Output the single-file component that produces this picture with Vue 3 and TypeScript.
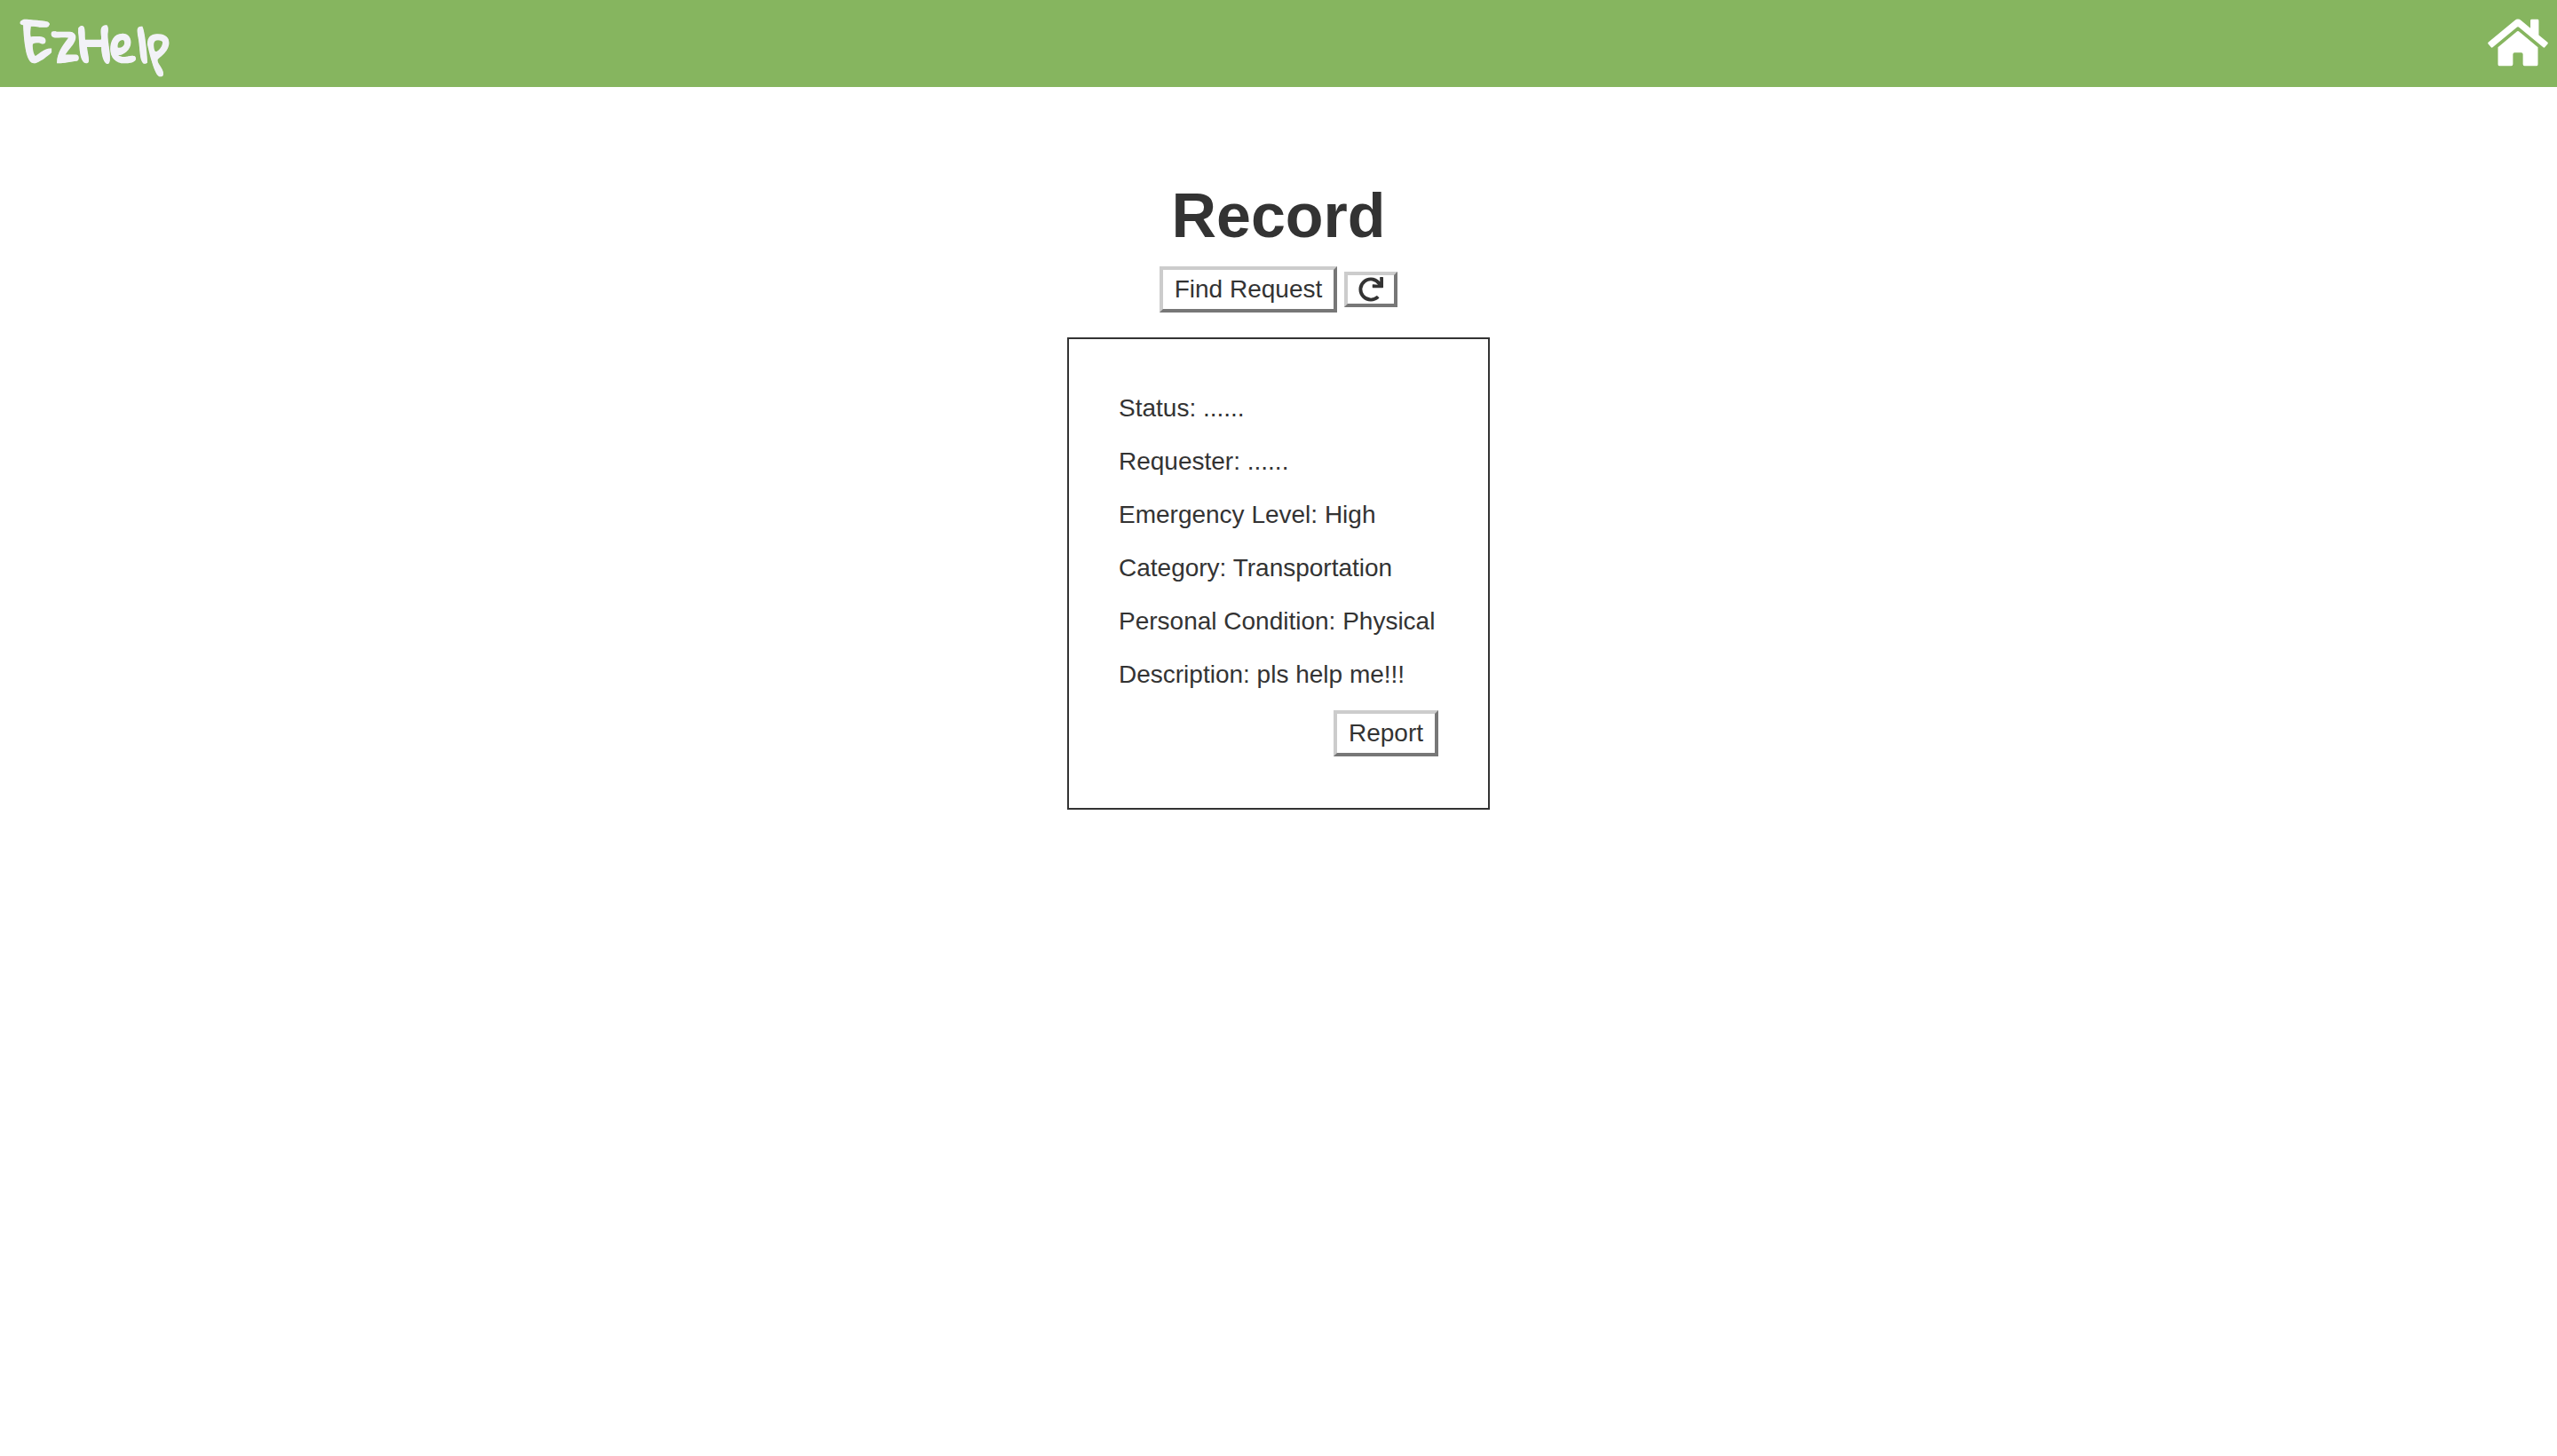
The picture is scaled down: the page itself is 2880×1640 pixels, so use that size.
<script setup lang="ts">
interface Field {
  label: string
  value: string
}

const fields: Field[] = [
  { label: 'Status', value: '......' },
  { label: 'Requester', value: '......' },
  { label: 'Emergency Level', value: 'High' },
  { label: 'Category', value: 'Transportation' },
  { label: 'Personal Condition', value: 'Physical' },
  { label: 'Description', value: 'pls help me!!!' },
]
</script>

<template>
  <div class="page">
    <header class="bar">
      <a class="brand" href="#">EzHelp</a>
      <a class="home" href="#" aria-label="Home">
        <svg viewBox="0 0 576 512" aria-hidden="true">
          <path d="M280.37 148.26L96 300.11V464a16 16 0 0 0 16 16l112.06-.29a16 16 0 0 0 15.92-16V368a16 16 0 0 1 16-16h64a16 16 0 0 1 16 16v95.64a16 16 0 0 0 16 16.05L464 480a16 16 0 0 0 16-16V300L295.67 148.26a12.19 12.19 0 0 0-15.3 0zM571.6 251.47L488 182.56V44.05a12 12 0 0 0-12-12h-56a12 12 0 0 0-12 12v72.61L318.47 43a48 48 0 0 0-61 0L4.34 251.47a12 12 0 0 0-1.6 16.9l25.5 31A12 12 0 0 0 45.15 301l235.22-193.74a12.19 12.19 0 0 1 15.3 0L530.9 301a12 12 0 0 0 16.9-1.6l25.5-31a12 12 0 0 0-1.7-16.93z" />
        </svg>
      </a>
    </header>

    <main class="content">
      <h1>Record</h1>
      <div class="actions">
        <button type="button" class="btn">Find Request</button>
        <button type="button" class="btn refresh" aria-label="Refresh">
          <svg viewBox="0 0 512 512" aria-hidden="true">
            <path d="M500.33 0h-47.41a12 12 0 0 0-12 12.57l4 82.76A247.42 247.42 0 0 0 256 8C119.34 8 7.9 119.53 8 256.19 8.1 393.07 119.1 504 256 504a247.1 247.1 0 0 0 166.18-63.91 12 12 0 0 0 .48-17.43l-34-34a12 12 0 0 0-16.38-.55A176 176 0 1 1 402.1 157.8l-101.53-4.87a12 12 0 0 0-12.57 12v47.41a12 12 0 0 0 12 12h200.33a12 12 0 0 0 12-12V12a12 12 0 0 0-12-12z" />
          </svg>
        </button>
      </div>

      <section class="card">
        <p v-for="field in fields" :key="field.label">{{ field.label }}: {{ field.value }}</p>
        <button type="button" class="btn report">Report</button>
      </section>
    </main>
  </div>
</template>

<style>
body {
  margin: 0;
  background: #fff;
}
</style>

<style scoped>
.page {
  font-family: "Helvetica Neue", "Liberation Sans", Arial, sans-serif;
  font-size: 28px;
  line-height: 40px;
  color: #333;
}

.bar {
  display: flex;
  align-items: center;
  justify-content: space-between;
  box-sizing: border-box;
  height: 98px;
  padding: 0 10px 2px 24px;
  background: #86b55f;
}

.brand {
  font-family: "Gloria Hallelujah", Lato, cursive;
  font-size: 54px;
  font-weight: 700;
  line-height: 80px;
  color: #f2f2f7;
  text-decoration: none;
  -webkit-text-stroke: 1px #f2f2f7;
}

.home {
  display: flex;
}

.home svg {
  width: 68px;
  height: 60px;
  fill: #fff;
}

.content {
  display: flex;
  flex-direction: column;
  align-items: center;
  padding-top: 105px;
}

h1 {
  margin: 0 0 17px;
  font-size: 70px;
  font-weight: 700;
  line-height: 80px;
}

.actions {
  display: flex;
  align-items: center;
  gap: 8px;
  margin-bottom: 28px;
}

.btn {
  box-sizing: border-box;
  height: 52px;
  padding: 0 13px;
  border: 4px solid;
  border-color: #ccc #777 #777 #ccc;
  background: #fff;
  color: #333;
  font: inherit;
}

.refresh {
  width: 60px;
  height: 40px;
  padding: 0 12px;
}

.refresh svg {
  display: block;
  width: 28px;
  height: 28px;
  fill: #333;
}

.card {
  display: flex;
  flex-direction: column;
  box-sizing: border-box;
  min-width: 476px;
  padding: 58px 56px;
  border: 2px solid #333;
}

.card p {
  margin: 0 0 20px;
}

.report {
  align-self: flex-end;
}
</style>
